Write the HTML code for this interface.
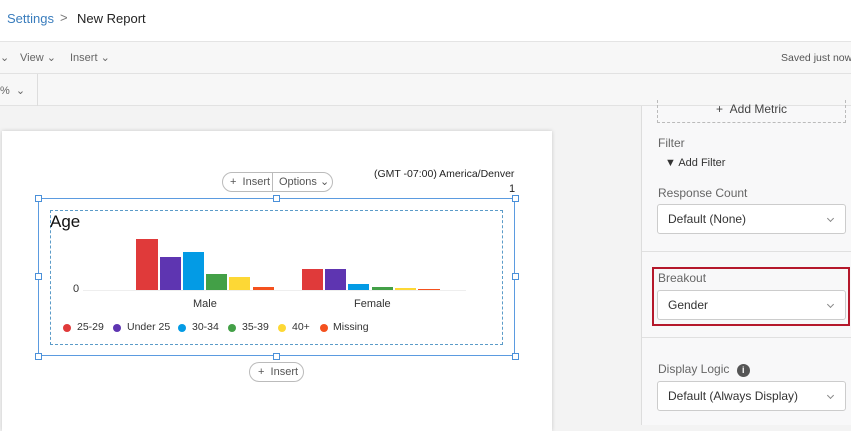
<!DOCTYPE html>
<html><head><style>
*{box-sizing:border-box;margin:0;padding:0}
body{width:851px;height:425px;overflow:hidden;position:relative;background:#f3f3f3;font-family:"Liberation Sans",sans-serif;color:#333}
.a{position:absolute;white-space:nowrap}
.h{width:7px;height:7px;border:1px solid #4a90d9;background:#fff;position:absolute}
.bar{position:absolute}
.sel{position:absolute;left:657px;width:189px;height:30px;background:#fff;border:1px solid #ccc;border-radius:3px;font-size:12px;padding:0 10px;line-height:28px;color:#333}
.chev{position:absolute;right:12px;top:11px;width:5px;height:5px;border-right:1px solid #888;border-bottom:1px solid #888;transform:rotate(45deg)}
.lbl{position:absolute;left:658px;font-size:12px;color:#666}
.dot{position:absolute;width:8px;height:8px;border-radius:50%;top:324px}
.lg{position:absolute;top:321px;font-size:10.5px;color:#333}
</style></head><body>
<div class="a" style="left:0;top:0;width:851px;height:42px;background:#fff;border-bottom:1px solid #e4e4e4"></div>
<div class="a" style="left:7px;top:11px;font-size:13px;color:#3a7dbd">Settings</div>
<div class="a" style="left:60px;top:10px;font-size:13px;color:#777">&gt;</div>
<div class="a" style="left:77px;top:11px;font-size:13px;color:#222">New Report</div>
<div class="a" style="left:0;top:42px;width:851px;height:32px;background:#f7f7f7;border-bottom:1px solid #e2e2e2"></div>
<div class="a" style="left:0;top:51px;font-size:11px;color:#666">⌄</div>
<div class="a" style="left:20px;top:51px;font-size:11px;color:#666">View ⌄</div>
<div class="a" style="left:70px;top:51px;font-size:11px;color:#666">Insert ⌄</div>
<div class="a" style="left:781px;top:52px;font-size:10.5px;color:#555">Saved just now</div>
<div class="a" style="left:0;top:74px;width:851px;height:32px;background:#f7f7f7;border-bottom:1px solid #e2e2e2"></div>
<div class="a" style="left:37px;top:74px;width:1px;height:32px;background:#ddd"></div>
<div class="a" style="left:0;top:84px;font-size:11px;color:#666">%&nbsp; ⌄</div>
<!-- page -->
<div class="a" style="left:2px;top:131px;width:550px;height:300px;background:#fff;box-shadow:0 0 4px rgba(0,0,0,.18)"></div>
<div class="a" style="left:222px;top:172px;width:111px;height:20px;border:1px solid #bbb;border-radius:10px;font-size:11px;color:#555;line-height:18px;background:#fff"><span style="padding-left:7px">+ &nbsp;Insert</span><span style="position:absolute;left:49px;top:0;height:18px;border-left:1px solid #bbb;padding-left:6px">Options ⌄</span></div>
<div class="a" style="left:374px;top:168px;font-size:10.5px;color:#222">(GMT -07:00) America/Denver</div>
<div class="a" style="left:509px;top:183px;font-size:11px;color:#222">1</div>
<div class="a" style="left:38px;top:198px;width:477px;height:158px;border:1px solid #5b9be0"></div>
<div class="a" style="left:50px;top:210px;width:453px;height:135px;border:1px dashed #5b9bc8"></div>
<div class="h" style="left:35px;top:195px"></div><div class="h" style="left:273px;top:195px"></div><div class="h" style="left:512px;top:195px"></div>
<div class="h" style="left:35px;top:273px"></div><div class="h" style="left:512px;top:273px"></div>
<div class="h" style="left:35px;top:353px"></div><div class="h" style="left:273px;top:353px"></div><div class="h" style="left:512px;top:353px"></div>
<div class="a" style="left:50px;top:212px;font-size:17px;color:#111">Age</div>
<div class="a" style="left:73px;top:283px;font-size:11px;color:#333">0</div>
<div class="a" style="left:83px;top:290px;width:383px;height:1px;background:#eee"></div>
<div class="bar" style="left:136px;top:239px;width:22px;height:51px;background:#e03a3a"></div>
<div class="bar" style="left:160px;top:257px;width:21px;height:33px;background:#5e35b1"></div>
<div class="bar" style="left:183px;top:252px;width:21px;height:38px;background:#039be5"></div>
<div class="bar" style="left:206px;top:274px;width:21px;height:16px;background:#43a047"></div>
<div class="bar" style="left:229px;top:277px;width:21px;height:13px;background:#fdd835"></div>
<div class="bar" style="left:253px;top:287px;width:21px;height:3px;background:#f4511e"></div>
<div class="bar" style="left:302px;top:269px;width:21px;height:21px;background:#e03a3a"></div>
<div class="bar" style="left:325px;top:269px;width:21px;height:21px;background:#5e35b1"></div>
<div class="bar" style="left:348px;top:284px;width:21px;height:6px;background:#039be5"></div>
<div class="bar" style="left:372px;top:287px;width:21px;height:3px;background:#43a047"></div>
<div class="bar" style="left:395px;top:288px;width:21px;height:2px;background:#fdd835"></div>
<div class="bar" style="left:418px;top:289px;width:22px;height:1px;background:#f4511e"></div>
<div class="a" style="left:193px;top:298px;font-size:11px">Male</div>
<div class="a" style="left:354px;top:298px;font-size:11px">Female</div>
<div class="dot" style="left:63px;background:#e03a3a"></div><div class="lg" style="left:77px">25-29</div>
<div class="dot" style="left:113px;background:#5e35b1"></div><div class="lg" style="left:127px">Under 25</div>
<div class="dot" style="left:178px;background:#039be5"></div><div class="lg" style="left:192px">30-34</div>
<div class="dot" style="left:228px;background:#43a047"></div><div class="lg" style="left:242px">35-39</div>
<div class="dot" style="left:278px;background:#fdd835"></div><div class="lg" style="left:292px">40+</div>
<div class="dot" style="left:320px;background:#f4511e"></div><div class="lg" style="left:333px">Missing</div>
<div class="a" style="left:249px;top:362px;width:55px;height:20px;border:1px solid #bbb;border-radius:10px;font-size:11px;color:#555;line-height:18px;padding-left:8px;background:#fff">+ &nbsp;Insert</div>
<!-- right panel -->
<div class="a" style="left:641px;top:106px;width:210px;height:319px;background:#f8f8f9;border-left:1px solid #ddd"></div>
<div class="a" style="left:657px;top:100px;width:189px;height:23px;border:1px dashed #bbb;border-top:none;font-size:12px;color:#444;text-align:center;line-height:18px">+ &nbsp;Add Metric</div>
<div class="lbl" style="top:136px">Filter</div>
<div class="a" style="left:665px;top:157px;font-size:11px;color:#333">▼ Add Filter</div>
<div class="lbl" style="top:186px">Response Count</div>
<div class="sel" style="top:204px">Default (None)<i class="chev"></i></div>
<div class="a" style="left:642px;top:251px;width:209px;height:1px;background:#e0e0e0"></div>
<div class="a" style="left:652px;top:267px;width:198px;height:59px;border:2px solid #b5182b"></div>
<div class="lbl" style="top:271px">Breakout</div>
<div class="sel" style="top:290px">Gender<i class="chev"></i></div>
<div class="a" style="left:642px;top:337px;width:209px;height:1px;background:#e0e0e0"></div>
<div class="lbl" style="top:362px">Display Logic <span style="display:inline-block;width:13px;height:13px;border-radius:50%;background:#555;color:#fff;font-size:9px;text-align:center;line-height:13px;font-weight:bold;margin-left:4px">i</span></div>
<div class="sel" style="top:381px">Default (Always Display)<i class="chev"></i></div>
</body></html>
